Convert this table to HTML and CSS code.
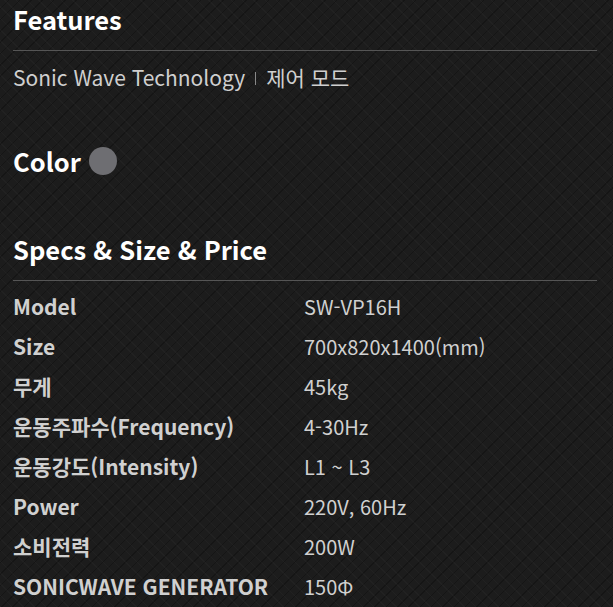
FILE: index.html
```html
<!DOCTYPE html>
<html lang="ko">
<head>
<meta charset="utf-8">
<link rel="stylesheet" href="styles.css">
</head>
<body>
<div class="page">
  <section class="features">
    <h2 class="title">Features</h2>
    <p class="feature-list">Sonic Wave Technology<span class="sep"></span>제어 모드</p>
  </section>
  <section class="color">
    <h2 class="title">Color <span class="swatch"></span></h2>
  </section>
  <section class="specs">
    <h2 class="title">Specs &amp; Size &amp; Price</h2>
    <dl class="spec-table">
      <dt>Model</dt><dd>SW-VP16H</dd>
      <dt>Size</dt><dd>700x820x1400(mm)</dd>
      <dt>무게</dt><dd>45kg</dd>
      <dt>운동주파수(Frequency)</dt><dd>4-30Hz</dd>
      <dt>운동강도(Intensity)</dt><dd>L1 ~ L3</dd>
      <dt>Power</dt><dd>220V, 60Hz</dd>
      <dt>소비전력</dt><dd>200W</dd>
      <dt>SONICWAVE GENERATOR</dt><dd>150Φ</dd>
    </dl>
  </section>
</div>
</body>
</html>
```
FILE: styles.css
```css
html, body {
  margin: 0;
  padding: 0;
}
body {
  background-color: #1c1c1c;
  background-image:
    repeating-linear-gradient(45deg, rgba(255,255,255,0.025) 0 1px, transparent 1px 8px),
    repeating-linear-gradient(-45deg, rgba(0,0,0,0.25) 0 1px, transparent 1px 8px);
  font-family: "Noto Sans CJK KR", "Noto Sans", sans-serif;
  color: #cfcfcf;
  height: 607px;
  overflow: hidden;
}
.page {
  padding: 0 16px 0 13px;
}
.title {
  margin: 0;
  font-size: 25.5px;
  font-weight: 700;
  color: #ffffff;
  line-height: 38px;
  display: flex;
  align-items: center;
}
.features .title {
  border-bottom: 1px solid #555;
  padding-bottom: 12px;
}
.feature-list {
  margin: 11px 0 0;
  font-size: 21px;
  line-height: 30px;
  display: flex;
  align-items: center;
}
.sep {
  display: inline-block;
  width: 1px;
  height: 13px;
  background: #888;
  margin: 3px 10px 0 10px;
}
.color {
  margin-top: 50px;
}
.swatch {
  display: inline-block;
  width: 28px;
  height: 28px;
  border-radius: 50%;
  background: #6e6e72;
  margin-left: 8px;
}
.specs {
  margin-top: 50px;
}
.specs .title {
  border-bottom: 1px solid #555;
  padding-bottom: 12px;
}
.spec-table {
  margin: 5px 0 0;
  display: grid;
  grid-template-columns: 291px 1fr;
  grid-auto-rows: 40px;
  align-items: center;
}
.spec-table dt {
  font-size: 21px;
  font-weight: 700;
  color: #d0d0d0;
}
.spec-table dd {
  margin: 0;
  font-size: 20px;
  color: #d0d0d0;
}
```
